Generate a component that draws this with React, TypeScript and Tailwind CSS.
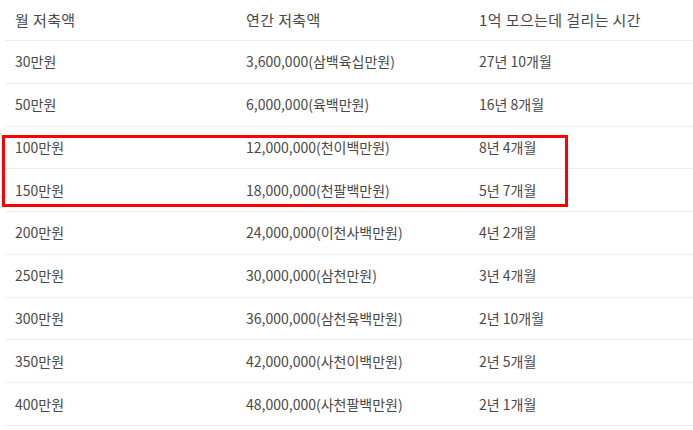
import React from "react";

const rows: [string, string, string][] = [
  ["30만원", "3,600,000(삼백육십만원)", "27년 10개월"],
  ["50만원", "6,000,000(육백만원)", "16년 8개월"],
  ["100만원", "12,000,000(천이백만원)", "8년 4개월"],
  ["150만원", "18,000,000(천팔백만원)", "5년 7개월"],
  ["200만원", "24,000,000(이천사백만원)", "4년 2개월"],
  ["250만원", "30,000,000(삼천만원)", "3년 4개월"],
  ["300만원", "36,000,000(삼천육백만원)", "2년 10개월"],
  ["350만원", "42,000,000(사천이백만원)", "2년 5개월"],
  ["400만원", "48,000,000(사천팔백만원)", "2년 1개월"],
];

export default function App() {
  return (
    <div
      className="relative w-[693px] h-[430px] bg-white overflow-hidden pl-[5px] text-[14px] text-[#484848]"
      style={{ fontFamily: '"Noto Sans CJK KR", "Noto Sans", sans-serif' }}
    >
      <div className="w-[688px]">
        <div className="flex h-[41px] items-center border-b border-[#ebebeb] text-[15px] tracking-[0.4px]">
          <div className="w-[231px] pl-[10px]">월 저축액</div>
          <div className="w-[233px] pl-[10px]">연간 저축액</div>
          <div className="flex-1 pl-[10px]">1억 모으는데 걸리는 시간</div>
        </div>
        {rows.map((r) => (
          <div
            key={r[0]}
            className="flex h-[42.78px] items-center border-b border-[#ebebeb]"
          >
            <div className="w-[231px] pl-[10px]">{r[0]}</div>
            <div className="w-[233px] pl-[10px]">{r[1]}</div>
            <div className="flex-1 pl-[10px]">{r[2]}</div>
          </div>
        ))}
      </div>
      <div className="absolute left-[2px] top-[135px] w-[566px] h-[72px] border-[3px] border-[#ff0000] pointer-events-none" />
    </div>
  );
}
